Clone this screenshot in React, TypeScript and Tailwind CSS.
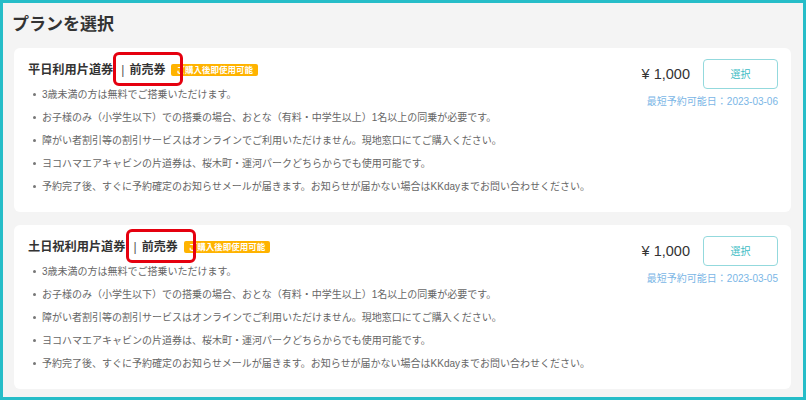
const plans = [
  {
    title: '平日利用片道券',
    price: '¥ 1,000',
    date: '2023-03-06',
  },
  {
    title: '土日祝利用片道券',
    price: '¥ 1,000',
    date: '2023-03-05',
  },
];

const notes = [
  '3歳未満の方は無料でご搭乗いただけます。',
  'お子様のみ（小学生以下）での搭乗の場合、おとな（有料・中学生以上）1名以上の同乗が必要です。',
  '障がい者割引等の割引サービスはオンラインでご利用いただけません。現地窓口にてご購入ください。',
  'ヨコハマエアキャビンの片道券は、桜木町・運河パークどちらからでも使用可能です。',
  '予約完了後、すぐに予約確定のお知らせメールが届きます。お知らせが届かない場合はKKdayまでお問い合わせください。',
];

function PlanCard({ plan }: { plan: (typeof plans)[number] }) {
  return (
    <div className="flex rounded-[6px] bg-white pl-[14px] pr-[13px] pt-[11px] pb-[14px]">
      {/* left: title + notes */}
      <div className="flex-1">
        <div className="flex h-[22px] items-center">
          <span className="text-[12.2px] font-bold leading-[22px] text-[#333]">{plan.title}</span>
          <span className="relative flex items-center">
            <span className="pl-[8px] text-[12px] leading-[22px] text-[#555]">|</span>
            <span className="ml-[5px] text-[12px] font-bold leading-[22px] text-[#333]">前売券</span>
            <span className="absolute left-0 -right-[18px] -top-[7px] -bottom-[5px] rounded-[6px] border-[3px] border-[#e5000f]" />
          </span>
          <span className="ml-[6px] flex h-[12px] items-center rounded-[2px] bg-[#ffb300] px-[5px] text-[8.5px] font-bold leading-none text-white">
            ご購入後即使用可能
          </span>
        </div>
        <ul className="mt-[2px]">
          {notes.map(n => (
            <li key={n} className="flex items-center text-[10px] leading-[23px] text-[#666]">
              <span className="ml-[5px] mr-[6px] h-[3px] w-[3px] rounded-full bg-[#777]" />
              {n}
            </li>
          ))}
        </ul>
      </div>

      {/* right: price + select */}
      <div className="flex flex-col items-end">
        <div className="flex items-center gap-[13px]">
          <span className="text-[14.5px] leading-none text-[#333]">{plan.price}</span>
          <button className="h-[30px] w-[75px] rounded-[4px] border border-[#93d9dd] bg-white text-[10px] text-[#3bbcc4]">
            選択
          </button>
        </div>
        <div className="mt-[6px] text-[10px] leading-[14px] text-[#7ab6e6]">最短予約可能日：{plan.date}</div>
      </div>
    </div>
  );
}

export default function App() {
  return (
    <div
      className="h-[400px] w-[806px] border-[3px] border-[#26bdc8] bg-[#f4f4f4] pl-[11px] pr-[12px] pt-[10px]"
      style={{ fontFamily: '"Liberation Sans", "Noto Sans CJK JP", sans-serif' }}
    >
      <h1 className="ml-[-2px] text-[17px] font-bold leading-[24px] text-[#333]">プランを選択</h1>
      <div className="mt-[11px] flex flex-col gap-[13px]">
        {plans.map(p => (
          <PlanCard key={p.title} plan={p} />
        ))}
      </div>
    </div>
  );
}
